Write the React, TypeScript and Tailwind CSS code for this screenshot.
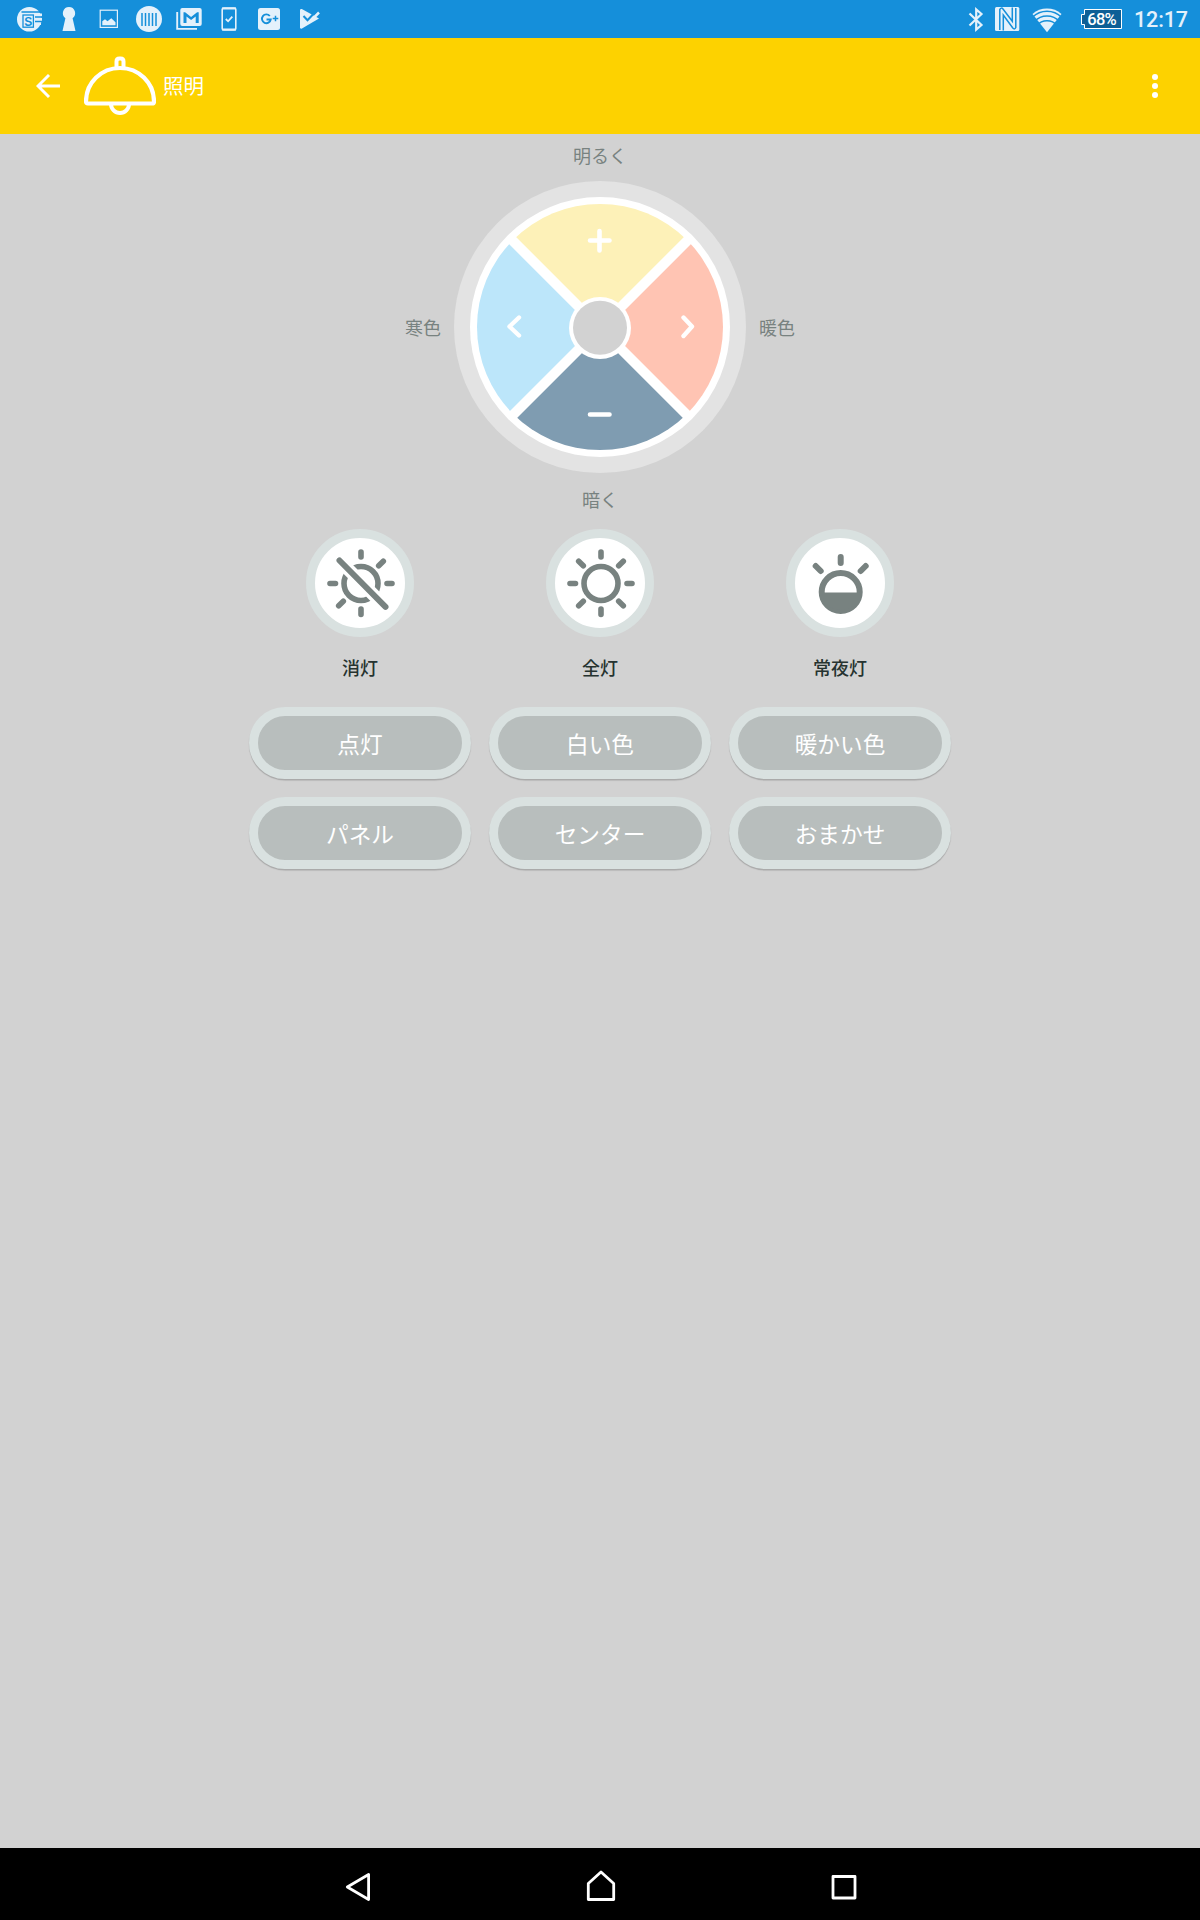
import React from 'react';

const BAR = '#158fda';
const ICE = '#e4f1fb';
const GREY = '#788280';

function Slot({ children }: { children: React.ReactNode }) {
  return (
    <svg width="40" height="38" viewBox="0 0 40 38" fill={ICE} className="shrink-0">
      {children}
    </svg>
  );
}

function StatusBar() {
  return (
    <header className="flex h-[38px] items-center justify-between bg-[#158fda] pl-[9px]">
      <div className="flex">
        <Slot>
          <circle cx="20.3" cy="19.3" r="12.3" />
          <path d="M26 13.5h7v3h-7zM26 18h7v3h-7zM26 22.5h6v2.5h-6z" />
          <path d="M12.500 12h20M26 17h7M26 21.500h7" stroke={BAR} strokeWidth="1.600" />
          <rect x="14" y="15" width="10.400" height="12.200" fill="none" stroke={BAR} strokeWidth="1.300" />
          <text x="19.200" y="25.500" textAnchor="middle" fontSize="12" fontWeight="700" fill={BAR} fontFamily="Liberation Sans, sans-serif">S</text>
        </Slot>
        <Slot>
          <path d="M20 7a6.200 6.200 0 0 1 3.600 11.200L26.500 31h-13l2.900-12.800A6.200 6.200 0 0 1 20 7z" />
        </Slot>
        <Slot>
          <rect x="11.200" y="10.200" width="17.200" height="17.200" fill="none" stroke={ICE} strokeWidth="1.200" />
          <path d="M13.300 25.300v-4l2.700-2 2.500 2 3.800-3 4.200 4v3z" />
        </Slot>
        <Slot>
          <circle cx="20" cy="19" r="13" />
          <path d="M13 13v13M16.500 13v13M20 13v13M23.500 13v13M27 13v13" stroke={BAR} strokeWidth="1.500" />
        </Slot>
        <Slot>
          <path fillRule="evenodd" d="M13.300 8h17.400q2 0 2 2v14q0 2-2 2H13.300q-2 0-2-2V10q0-2 2-2zM14.500 12.200v10.800h3v-6.500l4.600 3.600 4.600-3.600v6.500h3V12.200h-1.600l-6 4.700-6-4.700z" />
          <path d="M8.200 12v16.900H28" fill="none" stroke={ICE} strokeWidth="1.900" />
        </Slot>
        <Slot>
          <rect x="13.200" y="8" width="13.600" height="22" rx="1.500" fill="none" stroke={ICE} strokeWidth="1.600" />
          <path d="M13 8.500h14M13 29.500h14" stroke={ICE} strokeWidth="2" />
          <path d="M16.800 19l2.300 2.300 4.200-4.600" fill="none" stroke={ICE} strokeWidth="1.800" />
        </Slot>
        <Slot>
          <rect x="9" y="8" width="22" height="22" rx="2.500" />
          <path d="M20.800 16a4.400 4.400 0 1 0 .9 3.500h-4.200" fill="none" stroke={BAR} strokeWidth="1.900" />
          <path d="M23.700 18.500h5.600M26.500 15.700v5.600" stroke={BAR} strokeWidth="1.500" />
        </Slot>
        <Slot>
          <path d="M12.800 9l17.200 9.500L12.500 28.700q-1.500.3-1.500-1.400V10q.2-1.400 1.800-1z" />
          <path d="M22 20.500l8-8" stroke={ICE} strokeWidth="2.500" />
          <path d="M14.500 16l4 4.300 8.200-8.800" fill="none" stroke={BAR} strokeWidth="2" />
        </Slot>
      </div>
      <svg width="235" height="38" viewBox="965 0 235 38" fill={ICE}>
        <path d="M969.500 13.500l12 11.500-5.300 4.500V9.500l5.300 4.500-12 11.500" fill="none" stroke={ICE} strokeWidth="2.200" />
        <rect x="995" y="7" width="24.300" height="24" rx="1.500" />
        <path d="M999.800 30V9.500q1.500-2.500 3.200-.5l9.300 12.300V7.500" fill="none" stroke={BAR} strokeWidth="1.500" />
        <path d="M1003.300 30.500V15l9.500 13q1.800 2 3-.5V8" fill="none" stroke={BAR} strokeWidth="1.500" />
        <path d="M1032.500 14a22 22 0 0 1 29 0L1047 32.300z" />
        <path d="M1032.500 17.300a20.500 20.500 0 0 1 29 0M1034.500 21.500a17 17 0 0 1 25 0M1037 25.400a13 13 0 0 1 20 0" fill="none" stroke={BAR} strokeWidth="1.500" />
        <path d="M1084.500 9.500h37v19h-37v-4h-3v-10h3z" fill="#0c5f96" stroke="#fff" strokeWidth="1" />
        <text x="1102" y="24.900" textAnchor="middle" textLength="29.500" fontSize="16.500" fontWeight="500" fill="#fff" fontFamily="Roboto, sans-serif">68%</text>
        <text x="1134" y="27" textLength="54" fontSize="21.500" fontWeight="500" fontFamily="Roboto, sans-serif">12:17</text>
      </svg>
    </header>
  );
}

function AppBar() {
  return (
    <div className="flex h-24 items-center bg-[#fdd200] pl-9 pr-[42px] text-white">
      <svg width="24" height="24" viewBox="0 0 24 24" fill="none" stroke="#fff" strokeWidth="2.900">
        <path d="M24 12H2M13 1L2 12l11 11" />
      </svg>
      <svg width="72" height="60" viewBox="0 0 72 60" fill="none" stroke="#fff" className="ml-6">
        <path d="M2 45.500C2 27 17 12 36 12s34 15 34 33.500q0 2-2 2H4q-2 0-2-2z" strokeWidth="4.200" />
        <path d="M32.500 11V5.500q0-3 3-3h1q3 0 3 3V11" strokeWidth="4" />
        <path d="M27 48a9 9 0 0 0 18 0" strokeWidth="4" />
      </svg>
      <h1 className="-mt-[3px] ml-[7px] text-[20.5px] leading-6">照明</h1>
      <svg width="6" height="24" viewBox="0 0 6 24" fill="#fff" className="ml-auto">
        <circle cx="3" cy="3" r="3" />
        <circle cx="3" cy="12" r="3" />
        <circle cx="3" cy="21" r="3" />
      </svg>
    </div>
  );
}

function Wheel() {
  return (
    <svg width="292" height="292" viewBox="-146 -146 292 292">
      <clipPath id="disc">
        <circle r="123" />
      </clipPath>
      <circle r="146" fill="#e3e3e3" />
      <circle r="130" fill="#fff" />
      <g clipPath="url(#disc)">
        <path d="M0 0L-123 -123H123z" fill="#fdf1b8" />
        <path d="M0 0L-123 -123V123z" fill="#bce6fa" />
        <path d="M0 0L123 -123V123z" fill="#ffc4b3" />
        <path d="M0 0L-123 123H123z" fill="#7f9cb1" />
      </g>
      <path d="M-88 -87L88 89M88 -87L-88 89" stroke="#fff" strokeWidth="10" />
      <circle cy="1" r="31" fill="#fff" />
      <circle cy=".7" r="27" fill="#d2d2d2" />
      <path d="M-10 -86.500h19.500M-.5 -96v19.500M-10 87.500h19.500" stroke="#fff" strokeWidth="4.600" strokeLinecap="round" />
      <path d="M-81 -9.500L-90.500 -.5l9.500 9M83.500 -9.500L92 -.5l-8.500 9.500" fill="none" stroke="#fff" strokeWidth="4.400" strokeLinecap="round" strokeLinejoin="round" />
    </svg>
  );
}

const modes = [
  {
    label: '消灯',
    art: (
      <>
        <path d="M1 -31v5M1 26v5.500M-30 .500h5.500M27 .500h5M18.700 -17.200l4.600-4.600M-21.300 22.700l4.600-4.500" />
        <circle cx="1" cy=".5" r="17" />
        <path d="M-20.500 -22.500L25.500 24" stroke="#fff" strokeWidth="13" strokeLinecap="butt" />
        <path d="M-20.500 -22.500L25.500 23.800" strokeWidth="6" />
      </>
    ),
  },
  {
    label: '全灯',
    art: (
      <>
        <path d="M1 -31v5M1 26v5.500M-30 .500h5.500M27 .500h5M18.700 -17.200l4.600-4.600M-21.300 22.700l4.600-4.500M-21.300 -21.800l4.600 4.600M18.700 18.200l4.600 4.500" />
        <circle cx="1" cy=".5" r="17" />
      </>
    ),
  },
  {
    label: '常夜灯',
    art: (
      <>
        <path d="M.7 -26v6M-24.300 -17l5 5M25.700 -17l-5 5" strokeWidth="6" />
        <circle cx=".7" cy="9" r="19" strokeWidth="6" />
        <path d="M-18 9.500h37.500a18.800 18.800 0 0 1-37.500 0z" fill={GREY} stroke="none" />
      </>
    ),
  },
];

function Modes() {
  return (
    <div className="mt-4 grid w-[720px] grid-cols-3">
      {modes.map((m) => (
        <div key={m.label} className="flex flex-col items-center">
          <button className="size-[108px] rounded-full border-[9px] border-[#d9e1e0] bg-white">
            <svg width="90" height="90" viewBox="-45 -45 90 90" fill="none" stroke={GREY} strokeWidth="5.600" strokeLinecap="round">
              {m.art}
            </svg>
          </button>
          <span className="mt-[17px] text-[18px] font-medium leading-[27px] text-[#263330]">{m.label}</span>
        </div>
      ))}
    </div>
  );
}

export default function App() {
  const presets = ['点灯', '白い色', '暖かい色', 'パネル', 'センター', 'おまかせ'];
  return (
    <div className="flex h-[1920px] w-[1200px] flex-col bg-[#d2d2d2] font-['Noto_Sans_CJK_JP',sans-serif]">
      <StatusBar />
      <AppBar />
      <main className="flex flex-1 flex-col items-center">
        <p className="mt-2 text-[18px] leading-[27px] text-[#788280]">明るく</p>
        <div className="mt-3 flex items-center gap-[13px] text-[18px] leading-[27px] text-[#788280]">
          <span>寒色</span>
          <Wheel />
          <span>暖色</span>
        </div>
        <p className="mt-[13px] text-[18px] leading-[27px] text-[#788280]">暗く</p>
        <Modes />
        <div className="mt-[26px] grid grid-cols-3 gap-[18px]">
          {presets.map((p) => (
            <button
              key={p}
              className="h-[72px] w-[222px] rounded-full border-[9px] border-[#d9e1e0] bg-[#b8bebd] text-[22.7px] leading-[53px] text-white shadow-[0_1.5px_1px_rgba(0,0,0,0.2)]"
            >
              {p}
            </button>
          ))}
        </div>
      </main>
      <nav className="flex h-[72px] items-center justify-center bg-black">
        <svg width="560" height="72" viewBox="320 0 560 72" fill="none" stroke="#fff" strokeWidth="2.800" strokeLinejoin="round">
          <path d="M368.600 26.500v25L347.300 39z" />
          <path d="M588.300 51.500V35.500L601 24l12.700 11.500v16z" />
          <rect x="833" y="28.500" width="22" height="21.500" />
        </svg>
      </nav>
    </div>
  );
}
